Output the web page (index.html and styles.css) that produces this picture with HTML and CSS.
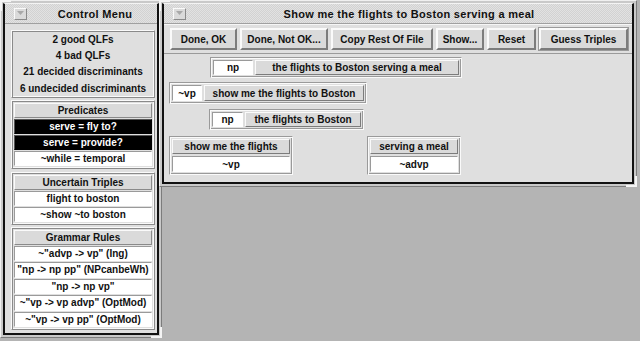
FILE: index.html
```html
<!DOCTYPE html>
<html lang="en">
<head>
    <meta charset="UTF-8">
    <title>Control Menu</title>
    <link rel="stylesheet" href="styles.css">
</head>
<body>
    <div class="desk">
        <!-- control menu window -->
        <div class="win win-left">
            <div class="frame">
                <div class="titlebar">
                    <span class="menu-btn"><svg width="7" height="5" viewBox="0 0 7 5"><path d="M0 0H7L3.5 4Z" fill="#a8a8a8"/></svg></span>
                    <span class="title">Control Menu</span>
                </div>
                <div class="panel">
                    <div class="group stats">
                        <div class="stat">2 good QLFs</div>
                        <div class="stat">4 bad QLFs</div>
                        <div class="stat">21 decided discriminants</div>
                        <div class="stat">6 undecided discriminants</div>
                    </div>
                    <div class="group">
                        <div class="head">Predicates</div>
                        <div class="item sel">serve = fly to?</div>
                        <div class="item sel">serve = provide?</div>
                        <div class="item">~while = temporal</div>
                    </div>
                    <div class="group triples">
                        <div class="head">Uncertain Triples</div>
                        <div class="item">flight to boston</div>
                        <div class="item">~show ~to boston</div>
                    </div>
                    <div class="group rules">
                        <div class="head">Grammar Rules</div>
                        <div class="item">~"advp -&gt; vp" (Ing)</div>
                        <div class="item">"np -&gt; np pp" (NPcanbeWh)</div>
                        <div class="item">"np -&gt; np vp"</div>
                        <div class="item">~"vp -&gt; vp advp" (OptMod)</div>
                        <div class="item">~"vp -&gt; vp pp" (OptMod)</div>
                    </div>
                </div>
            </div>
        </div>

        <!-- sentence window -->
        <div class="win win-right">
            <div class="frame">
                <div class="titlebar">
                    <span class="menu-btn"><svg width="7" height="5" viewBox="0 0 7 5"><path d="M0 0H7L3.5 4Z" fill="#a8a8a8"/></svg></span>
                    <span class="title">Show me the flights to Boston serving a meal</span>
                </div>
                <div class="toolbar">
                    <button class="btn">Done, OK</button>
                    <button class="btn">Done, Not OK...</button>
                    <button class="btn">Copy Rest Of File</button>
                    <button class="btn">Show...</button>
                    <button class="btn">Reset</button>
                    <button class="btn btn-default">Guess Triples</button>
                </div>
                <div class="tree">
                    <div class="node n1">
                        <div class="cell-white w40">np</div>
                        <div class="cell-btn">the flights to Boston serving a meal</div>
                    </div>
                    <div class="node n2">
                        <div class="cell-white w30">~vp</div>
                        <div class="cell-btn">show me the flights to Boston</div>
                    </div>
                    <div class="node n3">
                        <div class="cell-white w31">np</div>
                        <div class="cell-btn">the flights to Boston</div>
                    </div>
                    <div class="node col n4">
                        <div class="cell-btn">show me the flights</div>
                        <div class="cell-white">~vp</div>
                    </div>
                    <div class="node col n5">
                        <div class="cell-btn">serving a meal</div>
                        <div class="cell-white">~advp</div>
                    </div>
                </div>
            </div>
        </div>
    </div>
</body>
</html>
```

FILE: styles.css
```css
body {
    margin: 0;
    background: #b4b4b4;
    font-family: 'Liberation Sans', Arial, sans-serif;
    font-size: 10px;
    font-weight: bold;
    color: #111;
}

.desk {
    display: flex;
    align-items: flex-start;
    width: 640px;
    height: 341px;
}

/* window frame */
.win {
    position: relative;
    box-sizing: border-box;
    background: #c9c9c9;
    border: 1px solid;
    border-color: #f0f0f0 #7c7c7c #7c7c7c #f0f0f0;
    padding: 2px;
}

/* resize corner marks */
.win::before,
.win::after {
    content: '';
    position: absolute;
    width: 9px;
    height: 9px;
}

.win::before {
    left: -1px;
    top: -1px;
    border-left: 2px solid #f4f4f4;
    border-top: 2px solid #f4f4f4;
}

.win::after {
    right: -1px;
    bottom: -1px;
    border-right: 2px solid #f4f4f4;
    border-bottom: 2px solid #f4f4f4;
}

.win-left {
    width: 162px;
    height: 338px;
}

.win-right {
    width: 478px;
    height: 187px;
    margin-left: -3px;
}

.frame {
    box-sizing: border-box;
    height: 100%;
    display: flex;
    flex-direction: column;
    background: #dfdfdf;
    border: 2px solid #111;
    border-top: 1px solid #f4f4f4;
}

.titlebar {
    box-sizing: border-box;
    height: 20px;
    flex: none;
    display: flex;
    align-items: center;
    background: repeating-conic-gradient(#d2d2d2 0 25%, #e2e2e2 0 50%) 0 0 / 2px 2px;
    border-bottom: 1px solid #a0a0a0;
}

.menu-btn {
    box-sizing: border-box;
    width: 13px;
    height: 12px;
    margin-left: 9px;
    border: 1px solid;
    border-color: #fafafa #8a8a8a #8a8a8a #fafafa;
    background: #dadada;
    display: flex;
    align-items: flex-start;
    justify-content: flex-start;
    padding: 2px 0 0 2px;
}

.menu-btn svg {
    display: block;
}

.title {
    flex: 1;
    text-align: center;
    font-size: 11px;
    letter-spacing: 0.3px;
}

.win-left .title {
    padding-left: 6px;
}

/* control menu */
.panel {
    display: flex;
    flex-direction: column;
    gap: 3px;
    padding: 6px 2px 0 6px;
}

.group {
    border: 1px solid;
    border-color: #fafafa #8a8a8a #8a8a8a #fafafa;
    box-shadow: inset 1px 1px #8a8a8a, inset -1px -1px #fafafa;
    padding: 2px 2px 1px;
}

.stats {
    padding: 1px 1px 0;
    margin-bottom: -1px;
}

.triples {
    margin-bottom: -1px;
}

.stat {
    line-height: 16.2px;
    text-align: center;
}

.head,
.item {
    box-sizing: border-box;
    height: 15px;
    line-height: 13px;
    margin-bottom: 1px;
    text-align: center;
    white-space: nowrap;
    overflow: hidden;
    border: 1px solid;
}

.rules .item {
    height: 15.5px;
    line-height: 13.5px;
}

.head {
    background: #dadada;
    border-color: #fafafa #8a8a8a #8a8a8a #fafafa;
}

.item {
    background: #fff;
    border-color: #9a9a9a #fff #fff #9a9a9a;
}

.item.sel {
    background: #000;
    color: #fff;
    border-color: #555 #000 #000 #555;
}

/* sentence window */
.toolbar {
    display: grid;
    grid-template-columns: 67px 88px 102px 48px 49px 89px;
    column-gap: 3px;
    padding: 3px 0 3px 6px;
    border-top: 1px solid #f6f6f6;
    border-bottom: 1px solid #9a9a9a;
}

.btn {
    box-sizing: border-box;
    height: 22px;
    padding: 0;
    font: inherit;
    color: #111;
    background: #dadada;
    border: 2px solid;
    border-color: #fafafa #7c7c7c #7c7c7c #fafafa;
    white-space: nowrap;
}

.btn-default {
    box-shadow: 0 0 0 1px #9a9a9a;
}

.tree {
    position: relative;
    flex: 1;
}

.node {
    position: absolute;
    box-sizing: border-box;
    display: flex;
    gap: 2px;
    padding: 2px;
    border: 1px solid;
    border-color: #9a9a9a #fafafa #fafafa #9a9a9a;
    box-shadow: inset 1px 1px #fafafa, inset -1px -1px #9a9a9a;
}

.node.col {
    flex-direction: column;
}

.cell-white,
.cell-btn {
    box-sizing: border-box;
    border: 1px solid;
    text-align: center;
    white-space: nowrap;
    display: flex;
    align-items: center;
    justify-content: center;
}

.cell-white {
    background: #fff;
    border-color: #9a9a9a #fff #fff #9a9a9a;
}

.cell-btn {
    flex: 1;
    background: #dadada;
    border-color: #fafafa #7c7c7c #7c7c7c #fafafa;
}

.w40 { width: 40px; }
.w30 { width: 30px; }
.w31 { width: 31px; }

.n1 { left: 46px; top: 3px; width: 252px; height: 21px; }
.n2 { left: 5px; top: 28px; width: 198px; height: 22px; }
.n3 { left: 45px; top: 55px; width: 155px; height: 21px; }
.n4 { left: 5px; top: 82px; width: 124px; height: 39px; }
.n5 { left: 203px; top: 82px; width: 94px; height: 39px; }

.node.col .cell-btn { flex: none; height: 15px; }
.node.col .cell-white { height: 16px; }
```
